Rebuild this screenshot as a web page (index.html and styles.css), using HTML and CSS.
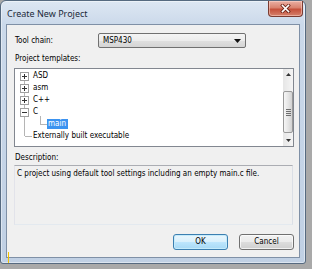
FILE: index.html
```html
<!DOCTYPE html>
<html>
<head>
<meta charset="utf-8">
<link rel="stylesheet" href="styles.css">
</head>
<body>
<div class="window">
  <div class="titlebar">
    <span class="title">Create New Project</span>
    <div class="close">
      <svg width="11" height="9" viewBox="0 0 11 9"><path d="M2.5 1.5 L8.5 7.5 M8.5 1.5 L2.5 7.5" stroke="#6a2418" stroke-width="3.2" stroke-linecap="square"/><path d="M2.5 1.5 L8.5 7.5 M8.5 1.5 L2.5 7.5" stroke="#fff" stroke-width="1.6" stroke-linecap="square"/></svg>
    </div>
  </div>
  <div class="client">
    <div class="toolrow">
      <span class="toollabel">Tool chain:</span>
      <div class="combo">
        <span>MSP430</span>
        <svg width="7" height="4" viewBox="0 0 7 4"><path d="M0 0h7L3.5 4z" fill="#111"/></svg>
      </div>
    </div>
    <div class="label">Project templates:</div>
    <div class="tree">
      <div class="items">
        <div class="item"><svg class="exp" width="9" height="9" viewBox="0 0 9 9"><rect x="0.5" y="0.5" width="8" height="8" fill="#fff" stroke="#a0a0a0"/><path d="M2 4.5h5M4.5 2v5" stroke="#333"/></svg><span class="txt">ASD</span></div>
        <div class="item"><svg class="exp" width="9" height="9" viewBox="0 0 9 9"><rect x="0.5" y="0.5" width="8" height="8" fill="#fff" stroke="#a0a0a0"/><path d="M2 4.5h5M4.5 2v5" stroke="#333"/></svg><span class="txt">asm</span></div>
        <div class="item"><svg class="exp" width="9" height="9" viewBox="0 0 9 9"><rect x="0.5" y="0.5" width="8" height="8" fill="#fff" stroke="#a0a0a0"/><path d="M2 4.5h5M4.5 2v5" stroke="#333"/></svg><span class="txt">C++</span></div>
        <div class="item"><svg class="exp" width="9" height="9" viewBox="0 0 9 9"><rect x="0.5" y="0.5" width="8" height="8" fill="#fff" stroke="#a0a0a0"/><path d="M2 4.5h5" stroke="#333"/></svg><span class="txt">C</span></div>
        <div class="item child"><span class="sel">main</span></div>
        <div class="item last"><span class="txt">Externally built executable</span></div>
      </div>
      <div class="scrollbar">
        <div class="sbtn"><svg width="5" height="3" viewBox="0 0 5 3"><path d="M0 3h5L2.5 0z" fill="#333"/></svg></div>
        <div class="track">
          <div class="thumb">
            <svg width="5" height="7" viewBox="0 0 5 7"><path d="M0 0.5h5M0 2.5h5M0 4.5h5M0 6.5h5" stroke="#6e6e6e"/></svg>
          </div>
        </div>
        <div class="sbtn"><svg width="5" height="3" viewBox="0 0 5 3"><path d="M0 0h5L2.5 3z" fill="#333"/></svg></div>
      </div>
    </div>
    <div class="label">Description:</div>
    <div class="desc">C project using default tool settings including an empty main.c file.</div>
    <div class="buttons">
      <div class="btn ok">OK</div>
      <div class="btn">Cancel</div>
    </div>
  </div>
</div>
<div class="mark"></div>
</body>
</html>
```
FILE: styles.css
```css
html, body {
  margin: 0;
  padding: 0;
}
body {
  position: relative;
  width: 312px;
  height: 269px;
  overflow: hidden;
  background: #a9a9a9;
  font-family: "DejaVu Sans Condensed", "DejaVu Sans", sans-serif;
  font-size: 8px;
  color: #000;
}
.window {
  width: 306px;
  height: 264px;
  box-sizing: border-box;
  border: 1px solid #566a80;
  border-radius: 6px 6px 3px 3px;
  background: linear-gradient(to bottom, #dde7f3 0, #cbd9ea 24px, #c0d0e4 100%);
  box-shadow: inset 0 0 0 1px rgba(255, 255, 255, 0.45);
  display: flex;
  flex-direction: column;
}
.titlebar {
  height: 23px;
  flex: none;
  display: flex;
  justify-content: space-between;
  align-items: flex-start;
  padding-left: 6px;
}
.title {
  font-family: "Noto Sans", sans-serif;
  font-size: 9px;
  line-height: 10px;
  margin-top: 8px;
  color: #1c2a3a;
}
.close {
  width: 35px;
  height: 16px;
  box-sizing: border-box;
  margin-right: 2px;
  border: 1px solid #7a3b31;
  border-top: none;
  border-radius: 0 0 4px 4px;
  background: linear-gradient(to bottom, #eab0a4 0, #d9826f 45%, #c5503b 55%, #d5816c 100%);
  box-shadow: inset 0 0 0 1px rgba(255, 220, 210, 0.5);
  display: flex;
  align-items: center;
  justify-content: center;
}
.client {
  flex: 1;
  margin: 0 5px 5px;
  border: 1px solid #7f90a6;
  background: #f0f0f0;
  display: flex;
  flex-direction: column;
  padding: 8px 5px 7px 7px;
  min-height: 0;
}
.toolrow {
  display: flex;
  align-items: center;
  height: 15px;
}
.toollabel {
  width: 83px;
  margin-left: 1px;
}
.combo {
  width: 148px;
  height: 15px;
  box-sizing: border-box;
  border: 1px solid #707070;
  border-radius: 2px;
  background: linear-gradient(to bottom, #f4f4f4 0, #ececec 50%, #e0e0e0 50%, #d4d4d4 100%);
  display: flex;
  align-items: center;
  justify-content: space-between;
  padding: 0 4px 0 4px;
}
.label {
  margin-top: 6px;
  margin-left: 1px;
  line-height: 10px;
  height: 10px;
}
.label + .desc {
  margin-top: 2px;
}
.tree {
  margin-top: 4px;
  height: 80px;
  box-sizing: border-box;
  border: 1px solid #828790;
  background: #fff;
  display: flex;
}
.items {
  flex: 1;
  position: relative;
  padding-top: 1px;
}
.items::before {
  content: "";
  position: absolute;
  left: 9px;
  top: 7px;
  height: 60px;
  border-left: 1px solid #b5b5b5;
}
.item {
  position: relative;
  height: 12px;
  display: flex;
  align-items: center;
  padding-left: 5px;
}
.exp {
  position: relative;
  flex: none;
}
.txt {
  margin-left: 4px;
  line-height: 10px;
}
.item.child {
  padding-left: 32px;
}
.item.child::before {
  content: "";
  position: absolute;
  left: 25px;
  top: -2px;
  width: 6px;
  height: 8px;
  border-left: 1px solid #b5b5b5;
  border-bottom: 1px solid #b5b5b5;
}
.sel {
  background: #3b93f0;
  color: #fff;
  line-height: 10px;
  padding: 0 2px 0 1px;
}
.item.last {
  padding-left: 14px;
}
.item.last::before {
  content: "";
  position: absolute;
  left: 10px;
  top: 6px;
  width: 7px;
  border-top: 1px solid #b5b5b5;
}
.scrollbar {
  width: 10px;
  flex: none;
  display: flex;
  flex-direction: column;
  background: linear-gradient(to right, #e6e6e6, #f5f5f5);
}
.sbtn {
  height: 11px;
  display: flex;
  align-items: center;
  justify-content: center;
}
.track {
  flex: 1;
  padding-top: 11px;
}
.thumb {
  height: 42px;
  box-sizing: border-box;
  border: 1px solid #999;
  border-radius: 2px;
  background: linear-gradient(to right, #f6f6f6, #e6e6e6 50%, #d2d2d2);
  display: flex;
  align-items: center;
  justify-content: center;
}
.desc {
  height: 61px;
  box-sizing: border-box;
  border: 1px solid;
  border-color: #abadb3 #dbdfe6 #e3e9ef #e2e3ea;
  padding: 3px 2px;
  line-height: 10px;
  margin-right: 1px;
}
.buttons {
  margin-top: 9px;
  display: flex;
  justify-content: flex-end;
  gap: 11px;
}
.btn {
  width: 55px;
  height: 16px;
  box-sizing: border-box;
  border: 1px solid #707070;
  border-radius: 3px;
  background: linear-gradient(to bottom, #f2f2f2 0, #ebebeb 50%, #dddddd 50%, #cfcfcf 100%);
  box-shadow: inset 0 0 0 1px rgba(255, 255, 255, 0.7);
  display: flex;
  align-items: center;
  justify-content: center;
  line-height: 10px;
}
.btn.ok {
  border-color: #3c7fb1;
  background: linear-gradient(to bottom, #eaf6fd 0, #d9f0fc 50%, #bee6fd 50%, #a7d9f5 100%);
  box-shadow: inset 0 0 0 1px #c5ebfb;
}
.mark {
  position: absolute;
  left: 8px;
  top: 252px;
  width: 1px;
  height: 11px;
  background: #f2c200;
}
```
